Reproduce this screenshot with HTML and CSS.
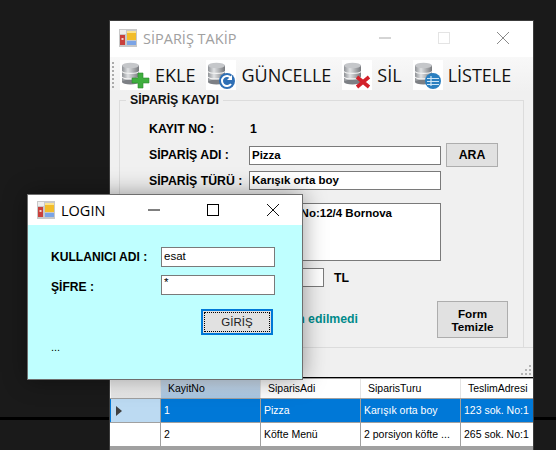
FILE: index.html
```html
<!DOCTYPE html>
<html>
  <head>
    <meta charset="utf-8">
    <link rel="stylesheet" href="styles.css">
  </head>
  <body>
    <svg class="defs" width="0" height="0">
      <defs>
        <linearGradient id="can" x1="0" x2="1" y1="0" y2="0">
          <stop offset="0" stop-color="#8f9296"/>
          <stop offset=".35" stop-color="#dfe1e3"/>
          <stop offset="1" stop-color="#77797d"/>
        </linearGradient>
        <symbol id="db" viewBox="0 0 30 30">
          <rect x="2" y="5" width="17" height="17" fill="url(#can)"/>
          <ellipse cx="10.5" cy="22" rx="8.5" ry="2.5" fill="#7d8085"/>
          <path d="M2 11.5c2 2.6 15 2.6 17 0M2 17c2 2.6 15 2.6 17 0" fill="none" stroke="#f4f4f4" stroke-width="1.2"/>
          <ellipse cx="10.5" cy="5.5" rx="8.5" ry="2.8" fill="#c5c7ca"/>
        </symbol>
        <symbol id="app" viewBox="0 0 18 18">
          <rect width="18" height="18" fill="#c8c8c8"/>
          <rect x="1" y="1" width="6" height="4" fill="#eeeeee"/>
          <rect x="1" y="6" width="5" height="10" fill="#c9403c"/>
          <rect x="2.5" y="9" width="2" height="2" fill="#f3d0c8"/>
          <rect x="8" y="2" width="9" height="9" fill="#f2bd2a"/>
          <rect x="8" y="2" width="9" height="2" fill="#fbe38e"/>
          <rect x="8" y="12" width="9" height="4" fill="#7ba4e6"/>
        </symbol>
      </defs>
    </svg>

    <div class="window main-window">
      <div class="titlebar main-titlebar">
        <svg class="app-icon"><use href="#app"/></svg>
        <span class="title">SİPARİŞ TAKİP</span>
        <span class="win-buttons">
          <svg width="59" height="20" viewBox="0 0 59 20"><path d="M23 10h12" stroke="#aaa"/></svg>
          <svg width="59" height="20" viewBox="0 0 59 20"><rect x="23.5" y="4.5" width="11" height="11" fill="none" stroke="#e4e4e4"/></svg>
          <svg width="59" height="20" viewBox="0 0 59 20"><path d="M23 4l12 12M35 4L23 16" stroke="#8a8a8a" fill="none"/></svg>
        </span>
      </div>

      <div class="toolbar">
        <span class="grip"></span>
        <span class="tool">
          <svg class="tool-icon" viewBox="0 0 30 30">
            <use href="#db" width="30" height="30"/>
            <path d="M18 13h5v5h6v5h-6v5h-5v-5h-6v-5h6z" fill="#3fae3f" stroke="#2c8a2c" stroke-width=".6"/>
          </svg>
          EKLE
        </span>
        <span class="tool">
          <svg class="tool-icon" viewBox="0 0 30 30">
            <use href="#db" width="30" height="30"/>
            <circle cx="21" cy="21" r="8" fill="#2f6fb5"/>
            <path d="M25 18a5 5 0 1 0 0 6" fill="none" stroke="#fff" stroke-width="2"/>
            <path d="M26 15v5h-5z" fill="#fff"/>
          </svg>
          GÜNCELLE
        </span>
        <span class="tool">
          <svg class="tool-icon" viewBox="0 0 30 30">
            <use href="#db" width="30" height="30"/>
            <path d="M15 17l12 10M27 17L15 27" stroke="#d3202a" stroke-width="3.6" fill="none"/>
          </svg>
          SİL
        </span>
        <span class="tool">
          <svg class="tool-icon" viewBox="0 0 30 30">
            <use href="#db" width="30" height="30"/>
            <circle cx="20" cy="21" r="8" fill="#2a7fc0"/>
            <path d="M14 18.5h12M14 21.5h12M14 24.5h12M18 16v10" stroke="#cfe6f6" stroke-width="1.2" fill="none"/>
          </svg>
          LİSTELE
        </span>
      </div>

      <div class="form-area">
        <fieldset class="group">
          <legend>SİPARİŞ KAYDI</legend>
          <div class="row row-no">
            <span class="label">KAYIT NO :</span>
            <span class="value">1</span>
          </div>
          <div class="row row-name">
            <span class="label">SİPARİŞ ADI :</span>
            <span class="input input-wide">Pizza</span>
            <span class="btn btn-search">ARA</span>
          </div>
          <div class="row row-type">
            <span class="label">SİPARİŞ TÜRÜ :</span>
            <span class="input input-wide">Karışık orta boy</span>
          </div>
          <div class="row row-address">
            <span class="label"></span>
            <span class="input input-wide input-area">123 sok. No:12/4 Bornova</span>
          </div>
          <div class="row row-price">
            <span class="label"></span>
            <span class="input input-small"></span>
            <span class="label-tl">TL</span>
          </div>
          <div class="row row-status">
            <span class="status-text">n edilmedi</span>
            <span class="btn btn-clear">Form<br>Temizle</span>
          </div>
        </fieldset>
      </div>

      <div class="status-strip">
        <svg class="resize-grip" width="12" height="12" viewBox="0 0 12 12">
          <path d="M9 1h2v2H9zM5 5h2v2H5zM9 5h2v2H9zM1 9h2v2H1zM5 9h2v2H5zM9 9h2v2H9z" fill="#b4b4b4"/>
        </svg>
      </div>

      <div class="grid">
        <div class="grid-row grid-head">
          <span class="cell row-head"></span>
          <span class="cell cell-active">KayitNo</span>
          <span class="cell">SiparisAdi</span>
          <span class="cell">SiparisTuru</span>
          <span class="cell cell-last">TeslimAdresi</span>
        </div>
        <div class="grid-row grid-selected">
          <span class="cell row-head"><i class="arrow"></i></span>
          <span class="cell">1</span>
          <span class="cell">Pizza</span>
          <span class="cell">Karışık orta boy</span>
          <span class="cell cell-last">123 sok. No:1</span>
        </div>
        <div class="grid-row">
          <span class="cell row-head"></span>
          <span class="cell">2</span>
          <span class="cell">Köfte Menü</span>
          <span class="cell">2 porsiyon köfte ...</span>
          <span class="cell cell-last">265 sok. No:1</span>
        </div>
      </div>
    </div>

    <div class="window login-window">
      <div class="titlebar login-titlebar">
        <svg class="app-icon"><use href="#app"/></svg>
        <span class="title">LOGIN</span>
        <span class="win-buttons">
          <svg width="59" height="20" viewBox="0 0 59 20"><path d="M23 10h12" stroke="#000"/></svg>
          <svg width="59" height="20" viewBox="0 0 59 20"><rect x="23.5" y="4.5" width="11" height="11" fill="none" stroke="#000"/></svg>
          <svg width="59" height="20" viewBox="0 0 59 20"><path d="M24 4l12 12M36 4L24 16" stroke="#111" fill="none"/></svg>
        </span>
      </div>
      <div class="login-body">
        <div class="login-row">
          <span class="login-label">KULLANICI ADI :</span>
          <span class="input login-input">esat</span>
        </div>
        <div class="login-row">
          <span class="login-label login-label-low">ŞİFRE :</span>
          <span class="input login-input login-pass">*</span>
        </div>
        <div class="login-action">
          <span class="btn-login"><span>GİRİŞ</span></span>
        </div>
        <div class="login-note">...</div>
      </div>
    </div>
  </body>
</html>
```

FILE: styles.css
```css
html, body {
  margin: 0;
  height: 100%;
}
body {
  width: 556px;
  height: 450px;
  overflow: hidden;
  position: relative;
  background: linear-gradient(#1a1a1a 417px, #000 417px, #000 420px, #1a1a1a 420px);
  font-family: "Liberation Sans", sans-serif;
  color: #000;
}
.defs {
  position: absolute;
}
.window {
  position: absolute;
  box-sizing: border-box;
  display: flex;
  flex-direction: column;
}
.main-window {
  left: 109px;
  top: 20px;
  width: 425px;
  height: 430px;
  overflow: hidden;
  background: #f0f0f0;
  border: 1px solid #3c3c3c;
  border-bottom: 0;
}
.login-window {
  left: 27px;
  top: 194px;
  width: 276px;
  height: 186px;
  background: #bfffff;
  border: 1px solid #6e6e6e;
  box-shadow: 0 0 22px rgba(0, 0, 0, .4);
}

/* title bars */
.titlebar {
  flex: none;
  display: flex;
  align-items: center;
  box-sizing: border-box;
  height: 36px;
  padding-left: 9px;
  background: #fff;
  font-family: "Open Sans", sans-serif;
  font-size: 14.5px;
  color: #a0a0a0;
}
.main-titlebar {
  padding-bottom: 2px;
}
.app-icon {
  width: 18px;
  height: 18px;
  margin-right: 6px;
}
.title {
  flex: 1;
}
.win-buttons {
  display: flex;
}
.login-titlebar {
  height: 30px;
  color: #000;
}

/* toolbar */
.toolbar {
  flex: none;
  display: flex;
  align-items: center;
  height: 35px;
  padding-left: 2px;
  background: linear-gradient(#f8f8f8, #f0f0f0);
  font-family: "Open Sans", sans-serif;
  font-size: 18px;
  color: #111;
}
.grip {
  width: 2px;
  height: 26px;
  margin-right: 6px;
  background: repeating-linear-gradient(#aaa 0 2px, transparent 2px 4px);
}
.tool {
  display: flex;
  align-items: center;
  gap: 5px;
  margin-right: 11px;
  white-space: nowrap;
}
.tool-icon {
  width: 30px;
  height: 30px;
  background: #fff;
}

/* sipariş form */
.form-area {
  flex: none;
  height: 255px;
  overflow: hidden;
  padding: 1px 9px 0;
  box-sizing: border-box;
}
.group {
  margin: 0;
  height: 300px;
  padding: 12px 0 0 29px;
  border: 1px solid #dcdcdc;
  box-sizing: border-box;
  font-weight: bold;
  font-size: 12.3px;
}
.group legend {
  margin-left: -23px;
  padding: 0 4px;
  color: #111;
}
.row {
  display: flex;
  align-items: center;
}
.label {
  flex: none;
  width: 100px;
  white-space: nowrap;
}
.value {
  margin-left: 1px;
}
.input {
  box-sizing: border-box;
  display: block;
  height: 19px;
  padding: 2px 2px 0;
  background: #fff;
  border: 1px solid #7a7a7a;
  font-size: 11.5px;
  white-space: nowrap;
  overflow: hidden;
}
.input-wide {
  width: 192px;
}
.input-area {
  height: 58px;
  padding-top: 3px;
}
.input-small {
  width: 75px;
}
.label-tl {
  margin-left: 10px;
}
.row-no {
  height: 18px;
  margin-top: 1px;
}
.row-name {
  height: 24px;
  margin-top: 5px;
}
.row-type {
  margin-top: 4px;
}
.row-address {
  align-items: flex-start;
  margin-top: 13px;
}
.row-price {
  margin-top: 7px;
}
.row-status {
  margin-top: 14px;
  height: 37px;
}
.btn {
  box-sizing: border-box;
  display: flex;
  align-items: center;
  justify-content: center;
  text-align: center;
  background: #e1e1e1;
  border: 1px solid #adadad;
}
.btn-search {
  width: 52px;
  height: 24px;
  margin-left: 5px;
}
.status-text {
  width: 209px;
  margin-top: -2px;
  color: #008b8b;
  text-align: right;
  white-space: nowrap;
}
.btn-clear {
  width: 71px;
  height: 37px;
  margin-left: 79px;
  font-size: 11.7px;
  line-height: 13px;
}

.status-strip {
  flex: none;
  position: relative;
  height: 30px;
  box-sizing: border-box;
  border-top: 1px solid #dcdcdc;
}
.resize-grip {
  position: absolute;
  right: 1px;
  bottom: 1px;
}

/* data grid */
.grid {
  flex: 1;
  background: #a0a0a0;
  border-top: 1px solid #000;
  padding-top: 1px;
  font-size: 10.5px;
}
.grid-row {
  display: flex;
  height: 24px;
  box-sizing: border-box;
  background: #fff;
  border-bottom: 1px solid #a0a0a0;
}
.cell {
  flex: none;
  box-sizing: border-box;
  width: 100px;
  padding-left: 3px;
  line-height: 23px;
  border-right: 1px solid #a0a0a0;
  white-space: nowrap;
  overflow: hidden;
}
.row-head {
  position: relative;
  width: 50px;
  margin-left: 1px;
}
.cell-last {
  flex: 1;
  border-right: 0;
}
.grid-head {
  height: 20px;
  background: #fff;
}
.grid-head .cell {
  padding-left: 7px;
  line-height: 19px;
  border-right-color: #e4e4e4;
}
.grid-head .row-head {
  background: linear-gradient(#f6f6f6, #e6e6e6);
}
.grid-head .cell-active {
  background: linear-gradient(#d0e0f0, #a9c7e3);
}
.grid-selected {
  background: #0078d7;
  color: #fff;
}
.grid-selected .row-head {
  background: #bcdaf2;
}
.arrow {
  position: absolute;
  left: 5px;
  top: 7px;
  border-left: 6px solid #404040;
  border-top: 5px solid transparent;
  border-bottom: 5px solid transparent;
}

/* login */
.login-body {
  flex: 1;
  padding: 22px 0 0 23px;
  font-size: 12.1px;
  font-weight: bold;
}
.login-row {
  display: flex;
  align-items: center;
  height: 20px;
  margin-bottom: 8px;
}
.login-label {
  width: 110px;
  white-space: nowrap;
}
.login-label-low {
  padding-top: 4px;
}
.login-input {
  width: 114px;
  height: 20px;
  padding: 2px 2px 0;
  font-weight: normal;
  font-size: 11.5px;
}
.login-pass {
  padding-top: 0;
}
.login-action {
  display: flex;
  margin: 14px 0 0 150px;
}
.btn-login {
  box-sizing: border-box;
  width: 72px;
  height: 26px;
  padding: 1px;
  border: 2px solid #0078d7;
  background: #e1e1e1;
  font-weight: normal;
  font-size: 11.5px;
}
.btn-login span {
  display: flex;
  align-items: center;
  justify-content: center;
  height: 100%;
  box-sizing: border-box;
  border: 1px dotted #000;
  color: #222;
}
.login-note {
  margin-top: 6px;
  font-weight: normal;
  font-size: 11px;
}
```
